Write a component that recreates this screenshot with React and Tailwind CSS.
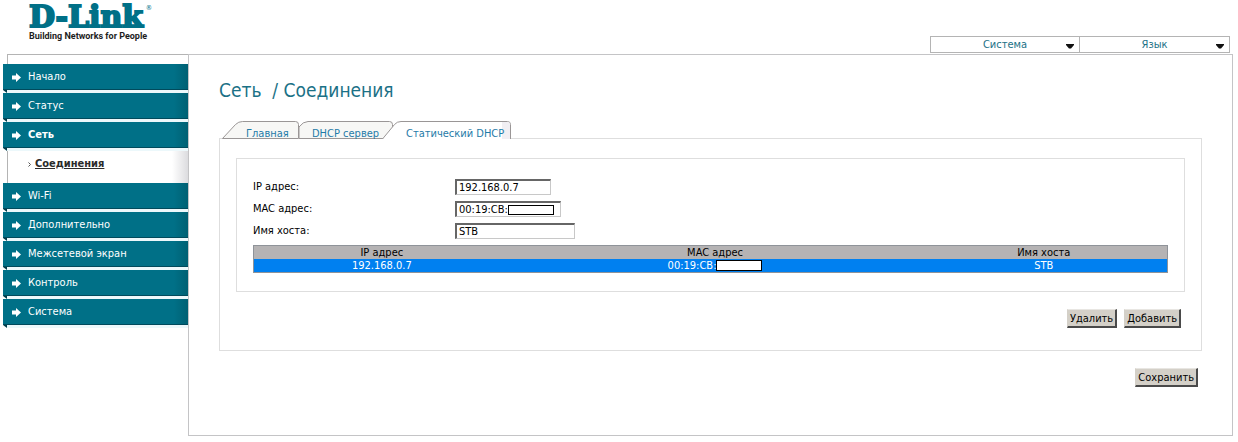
import clsx from "clsx";

const menu = [
  { label: "Начало" },
  { label: "Статус" },
  { label: "Сеть", active: true, children: ["Соединения"] },
  { label: "Wi-Fi" },
  { label: "Дополнительно" },
  { label: "Межсетевой экран" },
  { label: "Контроль" },
  { label: "Система" },
];

const fields = [
  { id: "ip", label: "IP адрес:", value: "192.168.0.7", width: "w-[96px]" },
  { id: "mac", label: "MAC адрес:", value: "00:19:CB:", width: "w-[106px]", masked: true },
  { id: "host", label: "Имя хоста:", value: "STB", width: "w-[120px]" },
];

const leases = [{ ip: "192.168.0.7", mac: "00:19:CB:", host: "STB" }];

function Logo() {
  return (
    <a href="#" className="relative block w-[130px] text-[#007087]">
      <div className="font-['DejaVu_Serif',serif] text-[30px] leading-[26px] font-bold [-webkit-text-stroke:2px_#007087]">
        D-Link
      </div>
      <span className="absolute top-0 right-[7px] text-[7px] leading-[8px]">®</span>
      <div className="font-[Roboto,sans-serif] text-[9px] leading-[12px] font-bold whitespace-nowrap text-[#1d1d1d]">
        Building Networks for People
      </div>
    </a>
  );
}

function HeaderSelect({ label, className }) {
  return (
    <div className={clsx("relative h-[17px] w-[150px] border border-[#b4b4b4]", className)}>
      <select
        aria-label={label}
        className="block h-[15px] w-full appearance-none bg-white text-center text-[11px] leading-[15px] text-[#1b7186] [text-align-last:center]"
      >
        <option>{label}</option>
      </select>
      <svg className="pointer-events-none absolute top-[7px] right-[5px]" width="8" height="5" viewBox="0 0 8 5">
        <path d="M0 0h8v1L5 4.500H3L0 1z" fill="#111" />
      </svg>
    </div>
  );
}

function MenuItem({ item }) {
  return (
    <li>
      <a
        href="#"
        className={clsx(
          "flex h-[26px] items-center gap-[7px] border-b border-[#004a5c] bg-[linear-gradient(to_left,#006073,#007087_14px)] pt-px pl-[9px] text-[11px] text-white",
          item.active && "font-bold"
        )}
      >
        <svg width="9" height="9" viewBox="0 0 9 9">
          <path d="M0 2.5h4V0l5 4.5L4 9V6.500H0z" fill="#fff" />
        </svg>
        {item.label}
      </a>
      <div className="flex h-[3px]">
        <svg width="4" height="3" viewBox="0 0 4 3">
          <path d="M0 0h4v3z" fill="#003c4a" />
        </svg>
        <div className="flex-1 bg-[#ecf8fb]" />
      </div>
      {item.children && (
        <ul className="ml-1 h-[32px] border-l border-[#b4b4b4] bg-[linear-gradient(to_left,#dcdcdf,#ffffff_16px)]">
          {item.children.map((child) => (
            <li key={child} className="flex items-center gap-[4px] pt-[5px] pl-5">
              <svg width="3" height="5" viewBox="0 0 3 5">
                <path d="M0.500 0.500l2 2-2 2" fill="none" stroke="#555" />
              </svg>
              <a href="#" className="text-[11px] leading-[16px] font-bold text-[#2b2b2b] underline">
                {child}
              </a>
            </li>
          ))}
        </ul>
      )}
    </li>
  );
}

function Tabs() {
  return (
    <nav className="relative z-10 -mb-px ml-[3px] flex text-[11px] leading-[12px] text-[#1f7ba8]">
      <a href="#" className="relative h-[18px] w-[77px] overflow-hidden pt-[7px] pl-[24px]">
        <svg className="absolute inset-0" width="77" height="18" viewBox="0 0 77 18">
          <path d="M0.500 17.500L13.500 3.500Q16.500 0.500 20.500 0.500H73.500Q76.500 0.500 76.500 3.500V17.500z" fill="#f7f7f5" stroke="#9a9696" />
        </svg>
        <span className="relative block">Главная</span>
      </a>
      <a href="#" className="relative h-[18px] w-[94px] overflow-hidden pt-[7px] pl-[13px]">
        <svg className="absolute inset-0" width="94" height="18" viewBox="0 0 94 18">
          <path d="M0 17.500V6Q4 0.500 9 0.500H90.500Q93.500 0.500 93.500 3.500V17.500z" fill="#f7f7f5" stroke="#9a9696" />
        </svg>
        <span className="relative block">DHCP сервер</span>
      </a>
      <a href="#" className="relative -ml-[11px] h-[18px] w-[129px] overflow-hidden pt-[7px] pl-[24px]">
        <svg className="absolute inset-0" width="129" height="18" viewBox="0 0 129 18">
          <path d="M0.500 18L12.500 3.500Q15 0.500 19 0.500H125.500Q128.500 0.500 128.500 3.500V18" fill="#fff" stroke="#9a9696" />
          <path d="M120 1h6q2 0 2 3v14h-8z" fill="#f1eff3" />
        </svg>
        <span className="relative block">Статический DHCP</span>
      </a>
    </nav>
  );
}

function Button({ children }) {
  return (
    <button
      type="button"
      className="h-[19px] border-t border-r-2 border-b-2 border-l border-t-[#e8e6e2] border-r-[#4a4a4a] border-b-[#4a4a4a] border-l-[#d4d0c8] bg-[#d4d0c8] px-[2px] pt-px text-[11px] leading-[15px] text-black"
    >
      {children}
    </button>
  );
}

export default function App() {
  return (
    <div className="bg-white pr-[5px] pb-[6px] pl-[3px] font-['DejaVu_Sans_Condensed','DejaVu_Sans',sans-serif] text-[11px] text-black">
      <header className="flex h-[54px] items-end justify-between">
        <div className="h-full pt-[4px] pl-[26px]">
          <Logo />
        </div>
        <div className="flex pr-[3px] pb-px">
          <HeaderSelect label="Система" />
          <HeaderSelect label="Язык" className="-ml-px w-[151px]" />
        </div>
      </header>

      <div className="flex">
        <aside className="w-[185px] shrink-0">
          <div className="ml-1 h-[10px] border-t border-l border-[#b4b4b4]" />
          <ul>
            {menu.map((item) => (
              <MenuItem key={item.label} item={item} />
            ))}
          </ul>
        </aside>

        <main className="flex-1 border border-[#c4c4c6] pr-[30px] pb-[48px] pl-[30px]">
          <h1 className="pt-[23px] text-[19px] leading-[24px] whitespace-pre text-[#1b7186]">
            Сеть{"  "}/ Соединения
          </h1>
          <div className="mt-[19px]">
            <Tabs />
            <section className="border border-[#dedede] px-4 pt-[19px] pb-[22px]">
              <div className="border border-[#dedede] px-4 pt-[20px] pb-[18px]">
                <form>
                  {fields.map((field) => (
                    <div key={field.id} className="flex h-[22px] items-start">
                      <label htmlFor={field.id} className="w-[202px] leading-[15px]">
                        {field.label}
                      </label>
                      <div className="relative">
                        <input
                          id={field.id}
                          type="text"
                          defaultValue={field.value}
                          className={clsx(
                            "block h-[16px] border-t-2 border-r border-b border-l-2 border-t-[#666] border-r-[#c8c8c8] border-b-[#c8c8c8] border-l-[#666] bg-white pl-[2px] text-[11px] leading-[13px]",
                            field.width
                          )}
                        />
                        {field.masked && (
                          <span className="absolute top-[4px] left-[53px] h-[10px] w-[46px] border border-black bg-white" />
                        )}
                      </div>
                    </div>
                  ))}
                </form>
                <table className="w-full table-fixed border-separate border-spacing-0 border border-[#8f9399] text-center leading-[13px]">
                  <thead className="bg-[#b5b3b4]">
                    <tr>
                      <th className="w-[28%] font-normal">IP адрес</th>
                      <th className="w-[45%] font-normal">MAC адрес</th>
                      <th className="w-[27%] font-normal">Имя хоста</th>
                    </tr>
                  </thead>
                  <tbody className="bg-[#0080f0] text-white">
                    {leases.map((lease) => (
                      <tr key={lease.ip}>
                        <td>{lease.ip}</td>
                        <td>
                          <div className="flex items-center justify-center">
                            {lease.mac}
                            <span className="h-[11px] w-[46px] border border-black bg-white" />
                          </div>
                        </td>
                        <td>{lease.host}</td>
                      </tr>
                    ))}
                  </tbody>
                </table>
              </div>
              <div className="mt-[17px] flex justify-end gap-[7px] pr-1">
                <Button>Удалить</Button>
                <Button>Добавить</Button>
              </div>
            </section>
            <div className="mt-[17px] flex justify-end pr-1">
              <Button>Сохранить</Button>
            </div>
          </div>
        </main>
      </div>
    </div>
  );
}
